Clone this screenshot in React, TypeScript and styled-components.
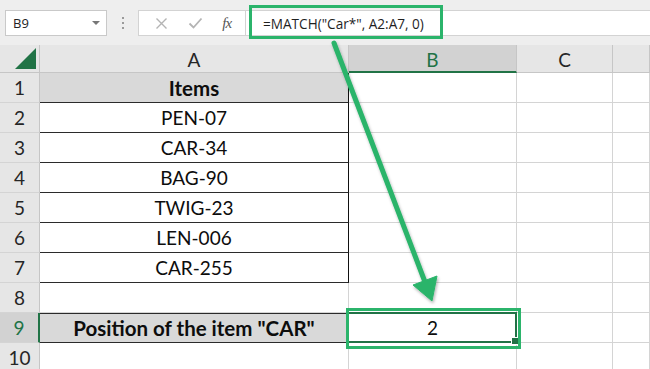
import styled, { createGlobalStyle } from 'styled-components';

const GlobalStyle = createGlobalStyle`
  html, body {
    margin: 0;
    padding: 0;
    background: #ffffff;
    overflow: hidden;
  }
  * { box-sizing: border-box; }
`;

const ACCENT = '#2bb46b';
const EXCEL_GREEN = '#217346';

const Page = styled.div`
  position: relative;
  width: 650px;
  height: 369px;
  overflow: hidden;
  font-family: Lato, "Open Sans", sans-serif;
`;

// formula bar on top
const TopBar = styled.div`
  position: relative;
  height: 45px;
  background: #eeeeee;
  display: flex;
  align-items: center;
  padding-left: 5px;
  padding-top: 1px;
`;

const NameBox = styled.div`
  width: 102px;
  height: 26px;
  background: #fff;
  border: 1px solid #c9c9c9;
  display: flex;
  align-items: center;
  justify-content: space-between;
  padding: 0 6px 0 7px;
  font-family: "Open Sans", sans-serif;
  font-size: 13px;
  color: #222;
`;

const Caret = styled.span`
  width: 0;
  height: 0;
  border-left: 4px solid transparent;
  border-right: 4px solid transparent;
  border-top: 4px solid #777;
`;

const Grip = styled.div`
  width: 31px;
  display: flex;
  flex-direction: column;
  align-items: center;
  gap: 3px;
`;

const Dot = styled.span`
  width: 2px;
  height: 2px;
  background: #9a9a9a;
`;

const FuncButtons = styled.div`
  width: 108px;
  height: 26px;
  background: #fff;
  border: 1px solid #d3d3d3;
  display: flex;
  align-items: center;
  justify-content: space-around;
  padding: 0 4px 0 6px;
`;

const Fx = styled.span`
  font-family: "Liberation Serif", serif;
  font-style: italic;
  font-size: 15px;
  color: #555;
  letter-spacing: -1px;
`;

const FormulaInput = styled.div`
  flex: 1;
  height: 26px;
  background: #fff;
  border-top: 1px solid #d3d3d3;
  border-bottom: 1px solid #d3d3d3;
  display: flex;
  align-items: center;
  padding-left: 17px;
  font-family: "Open Sans", sans-serif;
  font-size: 13.6px;
  color: #1f1f1f;
  white-space: pre;
`;

const FormulaHighlight = styled.div`
  position: absolute;
  left: 249px;
  top: 5px;
  width: 194px;
  height: 34px;
  border: 3px solid ${ACCENT};
`;

// sheet grid
const Sheet = styled.div`
  display: grid;
  grid-template-columns: 40px 309px 168px 96px 1fr;
  grid-template-rows: 28px;
  grid-auto-rows: 30px;
  background: #fff;
`;

const Corner = styled.div`
  position: relative;
  background: #e6e6e6;
  border-right: 1px solid #c6c6c6;
  border-bottom: 1px solid #c6c6c6;
  &::after {
    content: '';
    position: absolute;
    right: 3px;
    bottom: 3px;
    width: 0;
    height: 0;
    border-left: 21px solid transparent;
    border-bottom: 21px solid ${EXCEL_GREEN};
  }
`;

const ColHead = styled.div<{ $active?: boolean }>`
  background: ${(p) => (p.$active ? '#d2d2d2' : '#e6e6e6')};
  border-right: 1px solid #c6c6c6;
  border-bottom: ${(p) => (p.$active ? `2px solid ${EXCEL_GREEN}` : '1px solid #c6c6c6')};
  display: flex;
  align-items: center;
  justify-content: center;
  padding-top: 2px;
  font-size: 19px;
  color: ${(p) => (p.$active ? EXCEL_GREEN : '#262626')};
`;

const RowHead = styled.div<{ $active?: boolean }>`
  background: ${(p) => (p.$active ? '#d2d2d2' : '#e6e6e6')};
  border-right: ${(p) => (p.$active ? `2px solid ${EXCEL_GREEN}` : '1px solid #c6c6c6')};
  border-bottom: 1px solid #d4d4d4;
  display: flex;
  align-items: center;
  justify-content: center;
  font-size: 19px;
  color: ${(p) => (p.$active ? EXCEL_GREEN : '#262626')};
`;

const Cell = styled.div<{ $fill?: boolean; $bold?: boolean; $boxed?: boolean; $topLine?: boolean }>`
  position: relative;
  background: ${(p) => (p.$fill ? '#d9d9d9' : '#fff')};
  border-right: 1px solid ${(p) => (p.$boxed ? '#111' : '#d4d4d4')};
  border-bottom: 1px solid ${(p) => (p.$boxed ? '#2b2b2b' : '#d4d4d4')};
  box-shadow: ${(p) => (p.$topLine ? 'inset 0 1px 0 #2b2b2b' : 'none')};
  display: flex;
  align-items: center;
  justify-content: center;
  font-size: ${(p) => (p.$bold ? '20.5px' : '19px')};
  font-weight: ${(p) => (p.$bold ? 700 : 400)};
  color: #0d0d0d;
  white-space: nowrap;
`;

const Selection = styled.div`
  position: absolute;
  z-index: 1;
  inset: -1px -1px -1px -2px;
  border: 2px solid ${EXCEL_GREEN};
  &::after {
    content: '';
    position: absolute;
    right: -4px;
    bottom: -4px;
    width: 6px;
    height: 6px;
    background: ${EXCEL_GREEN};
    border: 1px solid #fff;
  }
`;

const CellHighlight = styled.div`
  position: absolute;
  z-index: 2;
  left: -3px;
  top: -5px;
  right: -5px;
  bottom: -7px;
  border: 3px solid ${ACCENT};
`;

const ArrowLayer = styled.svg`
  position: absolute;
  z-index: 3;
  left: 0;
  top: 0;
  pointer-events: none;
`;

const items = ['PEN-07', 'CAR-34', 'BAG-90', 'TWIG-23', 'LEN-006', 'CAR-255'];

function Row({ n, children, active }: { n: number; children?: React.ReactNode; active?: boolean }) {
  return (
    <>
      <RowHead $active={active}>{n}</RowHead>
      {children ?? <Cell />}
      <Cell />
      <Cell />
      <Cell />
    </>
  );
}

export default function App() {
  return (
    <Page>
      <GlobalStyle />
      <TopBar>
        <NameBox>
          B9
          <Caret />
        </NameBox>
        <Grip>
          <Dot />
          <Dot />
          <Dot />
        </Grip>
        <FuncButtons>
          <svg width="13" height="13" viewBox="0 0 13 13">
            <path d="M1.5 1.5 L11.5 11.5 M11.5 1.5 L1.5 11.5" stroke="#b4b4b4" strokeWidth="1.4" />
          </svg>
          <svg width="15" height="12" viewBox="0 0 15 12">
            <path d="M1.5 6.5 L5.5 10.5 L13.5 1.5" stroke="#b4b4b4" strokeWidth="1.8" fill="none" />
          </svg>
          <Fx>fx</Fx>
        </FuncButtons>
        <FormulaInput>=MATCH("Car*", A2:A7, 0)</FormulaInput>
        <FormulaHighlight />
      </TopBar>
      <Sheet>
        <Corner />
        <ColHead>A</ColHead>
        <ColHead $active>B</ColHead>
        <ColHead>C</ColHead>
        <ColHead />

        <Row n={1}>
          <Cell $fill $bold $boxed>Items</Cell>
        </Row>
        {items.map((it, i) => (
          <Row key={it} n={i + 2}>
            <Cell $boxed>{it}</Cell>
          </Row>
        ))}
        <Row n={8} />

        <RowHead $active>9</RowHead>
        <Cell $fill $bold $boxed $topLine>Position of the item "CAR"</Cell>
        <Cell>
          2
          <Selection />
          <CellHighlight />
        </Cell>
        <Cell />
        <Cell />

        <Row n={10} />
      </Sheet>
      <ArrowLayer width="650" height="369" viewBox="0 0 650 369">
        <defs>
          <filter id="shadow" x="-20%" y="-20%" width="140%" height="140%">
            <feDropShadow dx="1" dy="2" stdDeviation="1.5" floodColor="#000" floodOpacity="0.3" />
          </filter>
        </defs>
        <g filter="url(#shadow)" fill={ACCENT} stroke={ACCENT}>
          <line x1="334" y1="43" x2="425" y2="282" strokeWidth="5" strokeLinecap="round" />
          <polygon points="432,301 413,285 437,276" strokeWidth="1" strokeLinejoin="round" />
        </g>
      </ArrowLayer>
    </Page>
  );
}
